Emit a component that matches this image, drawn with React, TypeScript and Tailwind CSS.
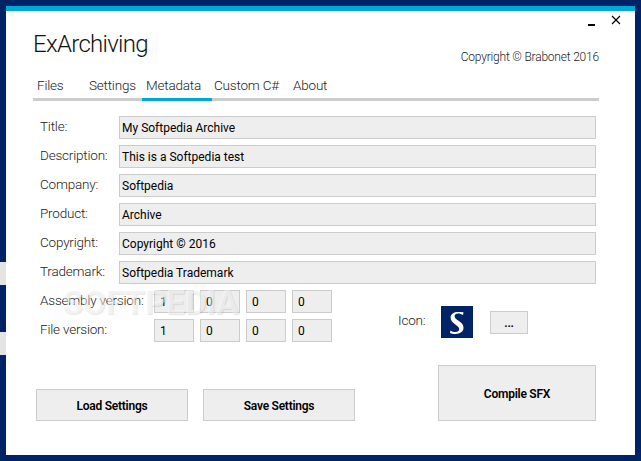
import React from 'react';

const FONT = "font-['Roboto','Noto_Sans',sans-serif]";

const fields = [
  ['Title:', 'My Softpedia Archive'],
  ['Description:', 'This is a Softpedia test'],
  ['Company:', 'Softpedia'],
  ['Product:', 'Archive'],
  ['Copyright:', 'Copyright © 2016'],
  ['Trademark:', 'Softpedia Trademark'],
];

const tabs = [
  { label: 'Files', w: 'w-[52px]', pl: 'pl-[4px]' },
  { label: 'Settings', w: 'w-[57px]', pl: 'pl-[4px]' },
  { label: 'Metadata', w: 'w-[70px]', pl: 'pl-[4px]', active: true },
  { label: 'Custom C#', w: 'w-[79px]', pl: 'pl-[2px]' },
  { label: 'About', w: 'w-[60px]', pl: 'pl-[2px]' },
];

const LABEL = 'text-[13.5px] font-light tracking-[-0.2px] text-[#222222]';
const BUTTON = 'justify-center pt-[2px] font-semibold tracking-[-0.25px]';

const Box = ({ children, className }: { children: React.ReactNode; className: string }) => (
  <div className={`flex items-center border border-[#cccccc] bg-[#eeeeee] text-[12px] text-black ${className}`}>
    {children}
  </div>
);

const Version = ({ label, values }: { label: string; values: string[] }) => (
  <div className="flex h-[23px] items-center">
    <div className={`w-[118px] pb-[2px] pl-[4px] ${LABEL}`}>{label}</div>
    <div className="flex gap-[6px]">
      {values.map((v, i) => (
        <Box key={i} className="h-[23px] w-[40px] pl-[5px]">{v}</Box>
      ))}
    </div>
  </div>
);

export default function App() {
  return (
    <div className={`relative h-[461px] w-[641px] overflow-hidden bg-[#002366] p-[6px] ${FONT}`}>
      <div className="flex h-[449px] w-[629px] flex-col border-t-[5px] border-[#00a8d8] bg-white">
        <div className="flex h-[90px] flex-col pl-[27px] pr-[36px]">
          <div className="flex h-[63px] items-start justify-between">
            <div className="mt-[16px] text-[24px] leading-[34px] font-light tracking-[-0.7px] text-[#111111]">ExArchiving</div>
            <div className="flex flex-col items-end">
              <div className="-mr-[22px] flex h-[18px] items-center gap-[15px]">
                <svg width="8" height="8" viewBox="0 0 8 8" className="mt-[6px]">
                  <rect x="0" y="5" width="7" height="2" fill="#000" />
                </svg>
                <svg width="10" height="10" viewBox="0 0 10 10">
                  <path d="M1 1 L9 9 M9 1 L1 9" stroke="#000" strokeWidth="1.2" fill="none" />
                </svg>
              </div>
              <div className="mt-[19px] text-[12px] leading-[18px] font-light tracking-[-0.2px] whitespace-nowrap text-[#222222]">
                Copyright © Brabonet 2016
              </div>
            </div>
          </div>
          <div className="flex h-[27px] border-b-[3px] border-[#cccccc]">
            {tabs.map((t) => (
              <div
                key={t.label}
                className={`-mb-[3px] h-[27px] leading-[22px] whitespace-nowrap ${LABEL} ${t.w} ${t.pl} ${t.active ? 'border-b-[3px] border-[#00a8d8]' : ''}`}
              >
                {t.label}
              </div>
            ))}
          </div>
        </div>

        <div className="flex flex-col gap-[6px] pt-[15px] pr-[39px] pl-[30px]">
          {fields.map(([label, value]) => (
            <div key={label} className="flex h-[23px] items-center">
              <div className={`w-[83px] pb-[2px] pl-[4px] ${LABEL}`}>{label}</div>
              <Box className="h-[23px] flex-1 pt-[1px] pl-[2px]">{value}</Box>
            </div>
          ))}
        </div>

        <div className="flex pt-[6px] pr-[39px] pl-[30px]">
          <div className="flex flex-col gap-[6px]">
            <Version label="Assembly version:" values={['1', '0', '0', '0']} />
            <Version label="File version:" values={['1', '0', '0', '0']} />
          </div>
          <div className="mt-[16px] ml-[66px] flex h-[32px] items-center">
            <div className={`w-[43px] pb-[4px] ${LABEL}`}>Icon:</div>
            <svg width="32" height="32" viewBox="0 0 32 32" className="bg-[#002366]">
              <path
                d="M22.5 6.2 L22 9 C20.5 8 18.8 7.4 17 7.4 C14.8 7.4 13.6 8.6 13.6 10.2 C13.6 12 15.4 13.2 17.6 14.8 C20.4 16.8 22.5 18.6 22.5 21.8 C22.5 25.8 18.8 28 14.5 28 C12.5 28 10.5 27.6 9 27 L9.4 24.4 C11 25.4 12.8 26 14.6 26 C16.8 26 18.2 24.8 18.2 23 C18.2 21.2 16.2 19.8 14 18.2 C11.4 16.3 9.6 14.6 9.6 11.6 C9.6 8 13 6 17 6 C19 6 21 6 22.5 6.2 Z"
                fill="#ffffff"
              />
            </svg>
            <Box className={`ml-[17px] h-[23px] w-[38px] ${BUTTON}`}>...</Box>
          </div>
        </div>

        <div className="flex items-end pt-[23px] pr-[39px] pl-[30px]">
          <Box className={`h-[32px] w-[152px] ${BUTTON}`}>Load Settings</Box>
          <Box className={`ml-[15px] h-[32px] w-[152px] ${BUTTON}`}>Save Settings</Box>
          <Box className={`ml-[83px] h-[56px] w-[158px] ${BUTTON}`}>Compile SFX</Box>
        </div>
      </div>
      <div className="pointer-events-none absolute top-[285px] left-[62px] text-[34px] leading-none font-bold tracking-[-0.5px] whitespace-nowrap text-white/50 [text-shadow:1px_1px_1px_rgba(0,0,0,0.1)]">
        SOFTPEDIA
      </div>
      <div className="absolute top-[262px] left-0 h-[23px] w-[6px] bg-[#e4e4e4]" />
      <div className="absolute top-[332px] left-0 h-[23px] w-[6px] bg-[#e4e4e4]" />
    </div>
  );
}
